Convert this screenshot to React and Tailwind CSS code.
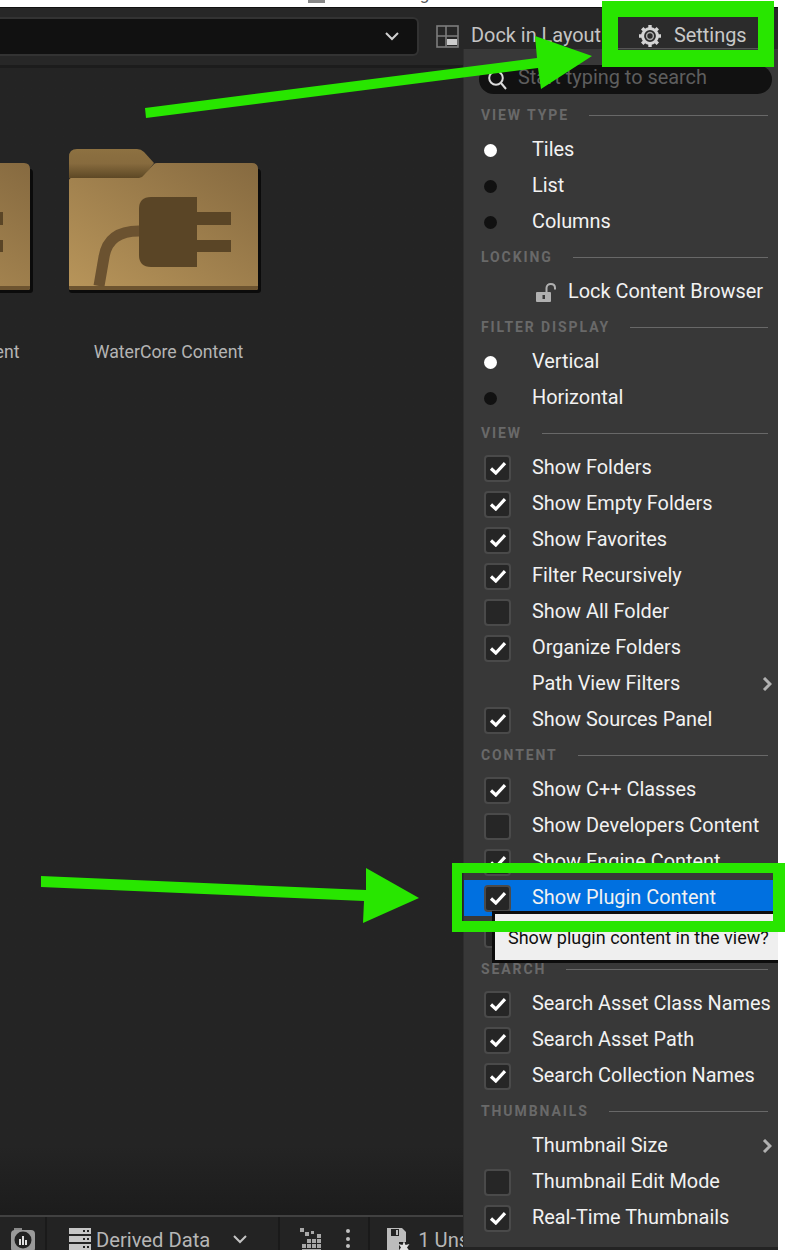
import React from "react";

function Check() {
  return (
    <svg width="18" height="14" viewBox="0 0 18 14" fill="none">
      <path d="M2 7.5L6.8 12L16 2.2" stroke="#fff" strokeWidth="3.2" />
    </svg>
  );
}

function CheckBox({ on }) {
  return (
    <span className="flex h-[27px] w-[27px] shrink-0 items-center justify-center rounded-[4px] border-2 border-[#4a4a4a] bg-[#262626]">
      {on && <Check />}
    </span>
  );
}

function Heading({ children }) {
  return (
    <div className="flex h-[34px] items-center pl-[17px] pr-[10px]">
      <span className="text-[14px] font-bold tracking-[1.9px] text-[#696969]">{children}</span>
      <span className="ml-[20px] h-px flex-1 bg-[#686868]" />
    </div>
  );
}

function Row({ label, on, blue, arrow }) {
  return (
    <div className={`flex h-9 items-center pl-[20px] pr-[6px] ${blue ? "bg-[#0070e0]" : ""}`}>
      {on === undefined ? <span className="w-[27px] shrink-0" /> : <CheckBox on={on} />}
      <span className="-mt-[1px] ml-[21px] flex-1 whitespace-nowrap text-[19.9px] text-[#f2f2f2]">{label}</span>
      {arrow && (
        <svg width="10" height="14" viewBox="0 0 10 14" fill="none">
          <path d="M2 1L8 7L2 13" stroke="#b0b0b0" strokeWidth="3" />
        </svg>
      )}
    </div>
  );
}

function Radio({ label, on }) {
  return (
    <div className="flex h-9 items-center pl-[20px]">
      <span className={`h-[13px] w-[13px] rounded-full ${on ? "bg-white" : "bg-[#111111]"}`} />
      <span className="-mt-[1px] ml-[35px] text-[19.9px] text-[#f2f2f2]">{label}</span>
    </div>
  );
}

function Folder() {
  return (
    <svg width="196" height="148" viewBox="0 0 196 148" className="block">
      <defs>
        <linearGradient id="body" x1="0" y1="1" x2="1" y2="0">
          <stop offset="0" stopColor="#b8955a" />
          <stop offset="1" stopColor="#866a40" />
        </linearGradient>
        <linearGradient id="tab" x1="0" y1="0" x2="0" y2="1">
          <stop offset="0" stopColor="#8d7141" />
          <stop offset="0.5" stopColor="#876b3e" />
          <stop offset="1" stopColor="#5d4825" />
        </linearGradient>
      </defs>
      <path d="M1 20H189Q192 20 192 24V141Q192 144 189 144H3Q0 144 0 141V24Z" fill="#0b0b0b" />
      <path d="M0 29V8Q0 0 8 0H68Q72 0 75 3L85 14L74 29Z" fill="url(#tab)" />
      <path d="M0 31Q0 29 2 29H70Q73 29 75 26L85 15Q86 14 88 14H183Q189 14 189 20V139Q189 141 187 141H2Q0 141 0 139Z" fill="url(#body)" />
      <path d="M0 137H189V139Q189 141 187 141H2Q0 141 0 139Z" fill="#6d5430" />
      <path d="M70 82C50 82 38 90 35 108L30 137" fill="none" stroke="#6b5230" strokeWidth="11" />
      <path d="M82 48H128V118H82Q70 118 70 106V60Q70 48 82 48Z" fill="#5a4526" />
      <rect x="128" y="63" width="34" height="13" fill="#5a4526" />
      <rect x="128" y="91" width="34" height="12" fill="#5a4526" />
    </svg>
  );
}

function Tile({ label }) {
  return (
    <div className="w-[228px] shrink-0">
      <Folder />
      <div className="mt-[42px] w-[199px] whitespace-nowrap text-center text-[17.7px] text-[#b4b4b4]">{label}</div>
    </div>
  );
}

export default function App() {
  return (
    <div className="relative h-[1250px] w-[785px] overflow-hidden bg-white font-[Roboto,sans-serif]">
      <div className="flex h-[1250px] w-[778px] flex-col">
        {/* clipped window title */}
        <div className="h-[7px] shrink-0 overflow-hidden bg-white pl-[308px]">
          <div className="-mt-[14px] flex items-center text-[17px] leading-[17px] text-[#555555]">
            <span className="h-[17px] w-[17px] bg-[#888888]" />
            <span className="ml-[13px] whitespace-nowrap tracking-[1px]">Water Plugin Window</span>
          </div>
        </div>
        <div className="h-px shrink-0 bg-[#111111]" />

        {/* toolbar */}
        <div className="flex h-[57px] shrink-0 items-center bg-[#272727]">
          <div className="flex h-[39px] w-[419px] shrink-0 items-center justify-end rounded-r-[6px] border-2 border-l-0 border-[#333333] bg-[#111111] pr-[18px]">
            <svg width="14" height="9" viewBox="0 0 14 9" fill="none">
              <path d="M1 1L7 7L13 1" stroke="#d0d0d0" strokeWidth="2" />
            </svg>
          </div>
          <svg width="23" height="23" viewBox="0 0 23 23" className="ml-[17px] shrink-0" fill="none">
            <rect x="1" y="1" width="21" height="21" stroke="#7d7d7d" strokeWidth="1.6" />
            <path d="M10 1V22M1 11H22" stroke="#7d7d7d" strokeWidth="1.6" />
            <rect x="11" y="14" width="10" height="6" fill="#cccccc" />
          </svg>
          <span className="-mt-[1px] ml-[12px] whitespace-nowrap text-[19.9px] text-[#c4c4c4]">Dock in Layout</span>
          <div className="ml-auto mr-[20px] mb-[7px] flex h-[33px] w-[140px] shrink-0 items-center border-b-2 border-[#555555] bg-[#2b2b2b] pl-[20px] pt-[7px]">
            <svg width="24" height="24" viewBox="0 0 24 24" fill="none" className="shrink-0">
              <circle cx="12" cy="12" r="7.4" stroke="#d4d4d4" strokeWidth="3" />
              <circle cx="12" cy="12" r="3.4" stroke="#a8a8a8" strokeWidth="1.5" />
              <path d="M12 1V5M12 19V23M1 12H5M19 12H23M4.2 4.2L7 7M17 17L19.8 19.8M19.8 4.2L17 7M7 17L4.2 19.8" stroke="#d4d4d4" strokeWidth="3.4" />
            </svg>
            <span className="mt-[1px] ml-[12px] text-[19.9px] text-[#c8c8c8]">Settings</span>
          </div>
        </div>
        <div className="h-[3px] shrink-0 bg-[#1c1c1c]" />

        {/* content */}
        <div className="flex-1 overflow-hidden bg-linear-to-b from-[#242424] via-[#242424] via-[94%] to-[#1c1c1c] pt-[81px]">
          <div className="-ml-[159px] flex">
            <Tile label="ControlRigs Content" />
            <Tile label="WaterCore Content" />
          </div>
        </div>

        {/* status bar */}
        <div className="h-[2px] shrink-0 bg-[#414141]" />
        <div className="flex h-[33px] shrink-0 items-start overflow-hidden bg-[#232323] pt-[11px] text-[20.2px] leading-[24px] text-[#b6b6b6]">
          <svg width="24" height="24" viewBox="0 0 24 24" className="ml-[11px] shrink-0">
            <rect x="3" y="0" width="8" height="3" fill="#8a8a8a" />
            <rect x="0" y="2" width="24" height="22" rx="4" fill="#9a9a9a" />
            <circle cx="12" cy="12" r="8.5" fill="#222222" />
            <path d="M8 11h2v6H8zM11 8h2v9h-2zM14 12h2v5h-2z" fill="#e0e0e0" />
          </svg>
          <span className="-mt-[11px] ml-[10px] h-[33px] w-[2px] shrink-0 bg-[#1a1a1a]" />
          <svg width="22" height="24" viewBox="0 0 22 24" className="ml-[22px] shrink-0">
            <path d="M0 0h22v6H0zM0 8h22v6H0zM0 16h22v8H0z" fill="#c6c6c6" />
            <path d="M14 2h2v2h-2zM18 2h2v2h-2zM14 10h2v2h-2zM18 10h2v2h-2zM14 18h2v2h-2zM18 18h2v2h-2z" fill="#222222" />
          </svg>
          <span className="ml-[5px] whitespace-nowrap">Derived Data</span>
          <svg width="14" height="9" viewBox="0 0 14 9" fill="none" className="ml-[23px] mt-[7px] shrink-0">
            <path d="M1 1L7 7L13 1" stroke="#c4c4c4" strokeWidth="2" />
          </svg>
          <span className="-mt-[11px] ml-[31px] h-[33px] w-[2px] shrink-0 bg-[#1a1a1a]" />
          <svg width="22" height="24" viewBox="0 0 22 24" className="ml-[20px] shrink-0">
            <path d="M0 0h4v4H0zM5 4h4v4H5zM11 3h3v3h-3zM17 6h4v4h-4zM17 11h4v4h-4zM17 16h4v4h-4zM12 11h4v4h-4zM12 16h4v4h-4zM7 11h4v4H7zM7 16h4v4H7zM2 16h4v4H2zM2 21h19v3H2z" fill="#a8a8a8" />
          </svg>
          <span className="ml-[24px] mt-[1px] flex shrink-0 flex-col gap-[3.5px]">
            <span className="h-[4px] w-[4px] rounded-full bg-[#c0c0c0]" />
            <span className="h-[4px] w-[4px] rounded-full bg-[#c0c0c0]" />
            <span className="h-[4px] w-[4px] rounded-full bg-[#c0c0c0]" />
          </span>
          <span className="-mt-[11px] ml-[18px] h-[33px] w-[2px] shrink-0 bg-[#1a1a1a]" />
          <svg width="24" height="24" viewBox="0 0 24 24" className="ml-[17px] shrink-0">
            <path d="M0 0h15l4 4v10H12v10H0z" fill="#bcbcbc" />
            <rect x="4" y="1" width="8" height="7" fill="#232323" />
            <rect x="9" y="2" width="2" height="5" fill="#bcbcbc" />
            <path d="M17 13l1.5 4 4-1-2.5 3.5 2.5 3.5-4-1-1.5 3-1.5-3-4 1 2.5-3.5-2.5-3.5 4 1z" fill="#e2e2e2" />
          </svg>
          <span className="ml-[7px] whitespace-nowrap">1 Unsaved</span>
        </div>
      </div>

      {/* settings menu */}
      <div className="absolute left-[463px] top-[49px] h-[1198px] w-[315px] border-l border-[#2e2e2e] bg-[#383838] pt-[16px]">
        <div className="ml-[15px] mr-[6px] flex h-[29px] items-center rounded-full bg-[#111111] pl-[8px] text-[19.9px] text-[#5e5e5e]">
          <svg width="22" height="22" viewBox="0 0 22 22" fill="none" className="shrink-0">
            <circle cx="9" cy="9" r="6.8" stroke="#dcdcdc" strokeWidth="2" />
            <path d="M14 14L19 20" stroke="#dcdcdc" strokeWidth="2" />
          </svg>
          <span className="-mt-[4px] ml-[9px] whitespace-nowrap">Start typing to search</span>
        </div>
        <div className="h-[4px]" />
        <Heading>VIEW TYPE</Heading>
        <Radio label="Tiles" on />
        <Radio label="List" />
        <Radio label="Columns" />
        <Heading>LOCKING</Heading>
        <div className="flex h-9 items-center pl-[72px]">
          <svg width="20" height="19" viewBox="0 0 20 19" fill="none" className="shrink-0">
            <rect x="0" y="9" width="15" height="10" rx="1" fill="#b0b0b0" />
            <rect x="6.5" y="12" width="2.5" height="4" fill="#383838" />
            <path d="M10.5 9V5C10.5 2.5 12.5 1 14.8 1S19 2.5 19 5V6.5" stroke="#b0b0b0" strokeWidth="2" />
          </svg>
          <span className="-mt-[1px] ml-[12px] whitespace-nowrap text-[19.9px] text-[#f2f2f2]">Lock Content Browser</span>
        </div>
        <Heading>FILTER DISPLAY</Heading>
        <Radio label="Vertical" on />
        <Radio label="Horizontal" />
        <Heading>VIEW</Heading>
        <Row label="Show Folders" on />
        <Row label="Show Empty Folders" on />
        <Row label="Show Favorites" on />
        <Row label="Filter Recursively" on />
        <Row label="Show All Folder" on={false} />
        <Row label="Organize Folders" on />
        <Row label="Path View Filters" arrow />
        <Row label="Show Sources Panel" on />
        <Heading>CONTENT</Heading>
        <Row label="Show C++ Classes" on />
        <Row label="Show Developers Content" on={false} />
        <Row label="Show Engine Content" on />
        <Row label="Show Plugin Content" on blue />
        <Row label="" on={false} />
        <Heading>SEARCH</Heading>
        <Row label="Search Asset Class Names" on />
        <Row label="Search Asset Path" on />
        <Row label="Search Collection Names" on />
        <Heading>THUMBNAILS</Heading>
        <Row label="Thumbnail Size" arrow />
        <Row label="Thumbnail Edit Mode" on={false} />
        <Row label="Real-Time Thumbnails" on />
      </div>

      {/* tooltip */}
      <div className="absolute left-[492px] top-[911px] flex h-[52px] w-[286px] items-center whitespace-nowrap border-[3px] border-r-0 border-[#0c0c0c] bg-[#efefef] pl-[13px] text-[18px] text-[#111111]">
        Show plugin content in the view?
      </div>

      {/* annotation boxes */}
      <div className="absolute left-[602px] top-px h-[66px] w-[172px] border-x-[16px] border-b-[17px] border-t-[16px] border-[#28e600]" />
      <div className="absolute left-[452px] top-[863px] h-[69px] w-[333px] border-b-[11px] border-l-[10px] border-r-[12px] border-t-[10px] border-[#28e600]" />

      {/* annotation arrows */}
      <svg width="785" height="1250" viewBox="0 0 785 1250" className="pointer-events-none absolute left-0 top-0">
        <polygon points="145,108 537,58 535,36 592,56 541,89 538,68 146,118" fill="#28e600" />
        <polygon points="41,876 366,890 366,868 419,898 363,923 364,901 41,887" fill="#28e600" />
      </svg>
    </div>
  );
}
